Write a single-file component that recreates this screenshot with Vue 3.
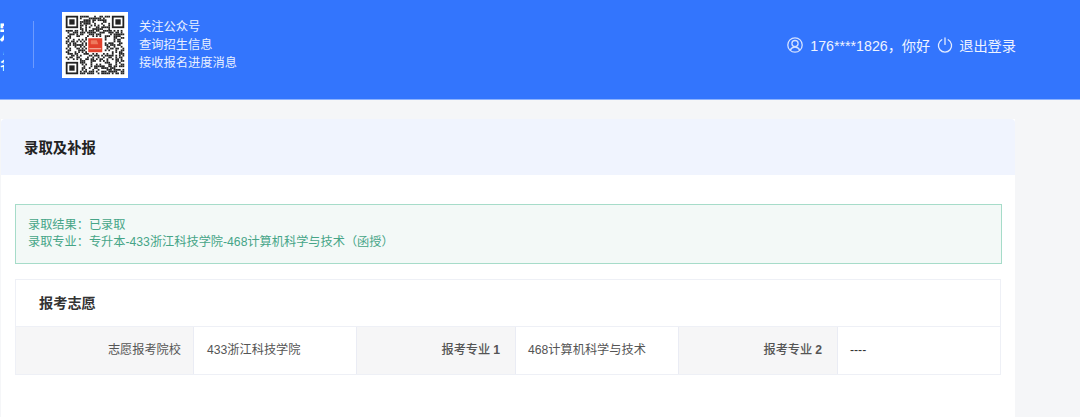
<script setup>
const N = 33
const size = 58.5 / N
const mods = []
let s = 20240611
const rnd = () => {
  s = (s * 1664525 + 1013904223) >>> 0
  return (s >>> 16) / 65536
}
const inFinder = (x, y) =>
  (x < 8 && y < 8) || (x >= N - 8 && y < 8) || (x < 8 && y >= N - 8)
const inLogo = (x, y) => x >= 12 && x <= 21 && y >= 12 && y <= 20
for (let y = 0; y < N; y++) {
  for (let x = 0; x < N; x++) {
    if (inFinder(x, y) || inLogo(x, y)) continue
    if (rnd() > 0.47) mods.push({ k: `${x}-${y}`, x: x * size, y: y * size })
  }
}
const finders = [
  { k: 'a', x: 0, y: 0 },
  { k: 'b', x: (N - 7) * size, y: 0 },
  { k: 'c', x: 0, y: (N - 7) * size }
]
const cells = [
  { label: '志愿报考院校', num: '', value: '433浙江科技学院' },
  { label: '报考专业', num: '1', value: '468计算机科学与技术' },
  { label: '报考专业', num: '2', value: '----' }
]
</script>

<template>
  <div class="page">
    <header class="top">
      <div class="logo-cut">
        <span class="cut-big">宏</span>
        <span class="cut-small">/</span>
        <span class="cut-mid">名</span>
      </div>
      <div class="divider"></div>
      <div class="qr">
        <svg width="66" height="66" viewBox="-3.75 -3.75 66 66">
          <rect x="-3.75" y="-3.75" width="66" height="66" fill="#fff" />
          <g class="qr-dots">
            <rect v-for="m in mods" :key="m.k" :x="m.x" :y="m.y" :width="size" :height="size" fill="#222" />
            <g v-for="f in finders" :key="f.k" :transform="`translate(${f.x} ${f.y})`">
              <rect x="0.9" y="0.9" :width="size * 7 - 1.8" :height="size * 7 - 1.8" fill="none" stroke="#222" stroke-width="1.8" />
              <rect :x="size * 2" :y="size * 2" :width="size * 3" :height="size * 3" fill="#222" />
            </g>
            <rect x="21.5" y="21.5" width="15.5" height="15.5" fill="#fff" />
            <rect x="22.5" y="22.5" width="14" height="14" fill="#e2402c" />
            <path d="M25 24.5h6l1.5 4h-7.500z" fill="#ee7a5e" />
            <rect x="23.500" y="32.500" width="12" height="1" fill="#f6c3b5" />
          </g>
        </svg>
      </div>
      <div class="qr-text">
        <div>关注公众号</div>
        <div>查询招生信息</div>
        <div>接收报名进度消息</div>
      </div>
      <div class="user">
        <svg class="ico" width="16" height="16" viewBox="0 0 16 16" fill="none" stroke="#d5e2ff" stroke-width="1.3">
          <circle cx="8" cy="8" r="7.2" />
          <circle cx="8" cy="6.6" r="3.1" />
          <path d="M3.200 13.200c1-2 2.800-3.200 4.800-3.200s3.800 1.200 4.800 3.200" />
        </svg>
        <span class="phone">176****1826，你好</span>
        <svg class="ico power" width="16" height="16" viewBox="0 0 16 16" fill="none" stroke="#e3ecff" stroke-width="1.3" stroke-linecap="round">
          <path d="M4.800 2.800a6.600 6.600 0 1 0 6.400 0" />
          <path d="M8 1v6.400" />
        </svg>
        <span class="logout">退出登录</span>
      </div>
    </header>

    <main class="card">
      <div class="card-head">录取及补报</div>
      <div class="card-body">
        <div class="alert">
          <div>录取结果：已录取</div>
          <div>录取专业：专升本-433浙江科技学院-468计算机科学与技术（函授）</div>
        </div>
        <section class="panel">
          <div class="panel-title">报考志愿</div>
          <div class="grid">
            <template v-for="c in cells" :key="c.value">
              <div class="cell label" :class="{ strong: c.num }">{{ c.label }}<b v-if="c.num" class="num">{{ c.num }}</b></div>
              <div class="cell value" :class="{ first: !c.num, dash: c.value === '----' }">{{ c.value }}</div>
            </template>
          </div>
        </section>
      </div>
    </main>
  </div>
</template>

<style>
html, body { background: #f5f6f8; overflow: hidden; }
</style>

<style scoped>
.page {
  width: 1080px;
  height: 417px;
  overflow: hidden;
  background: #f5f6f8;
  font-family: "Liberation Sans", "Noto Sans CJK SC", sans-serif;
}
.top {
  height: 99px;
  border-bottom: 1px solid #8db2fd;
  background: #3375fd;
  display: flex;
  align-items: center;
  color: #fff;
}
.logo-cut {
  width: 4px;
  height: 52px;
  overflow: hidden;
  display: flex;
  flex-direction: column;
  align-items: flex-end;
  color: #fff;
  margin-bottom: 7px;
  font-weight: 700;
}
.cut-big { font-size: 22px; line-height: 26px; white-space: nowrap; margin-right: -17px; }
.cut-small { font-size: 10px; line-height: 12px; margin-right: -2px; color: #a9c6ff; font-weight: 400; }
.cut-mid { font-size: 13px; line-height: 14px; margin-right: -9px; }
.divider {
  width: 1px;
  height: 47px;
  margin-left: 29px;
  margin-bottom: 10px;
  background: #6d9bfe;
}
.qr {
  width: 66px;
  height: 66px;
  margin-left: 28px;
  margin-bottom: 9px;
  overflow: hidden;
}
.qr svg { display: block; }
.qr-dots { filter: blur(0.3px); }
.qr-text {
  margin-left: 11px;
  margin-bottom: 9px;
  font-size: 12.25px;
  line-height: 18px;
  color: #e9f0ff;
}
.user {
  margin-left: auto;
  margin-right: 64px;
  margin-bottom: 10px;
  display: flex;
  align-items: center;
  font-size: 14.2px;
  color: #eef3ff;
}
.ico { display: block; flex: none; }
.phone { margin-left: 7px; }
.power { margin-left: 7px; }
.logout { margin-left: 6px; }
.card {
  width: 1014px;
  margin: 19px 0 0 1px;
  background: #fff;
}
.card-head {
  height: 56px;
  line-height: 58px;
  padding-left: 23px;
  background: #f0f4fe;
  border-radius: 4px 4px 0 0;
  font-size: 14.4px;
  font-weight: 700;
  color: #222;
}
.card-body {
  padding: 29px 13px 43px 14px;
}
.alert {
  height: 60px;
  box-sizing: border-box;
  padding: 12px 12px;
  border: 1px solid #a6dcc9;
  background: #f3f9f7;
  color: #46a587;
  font-size: 12.2px;
  line-height: 17px;
}
.panel {
  margin-top: 15px;
  width: 986px;
  box-sizing: border-box;
  border: 1px solid #eef0f6;
}
.panel-title {
  height: 46px;
  line-height: 46px;
  padding-left: 23px;
  font-size: 14.2px;
  font-weight: 700;
  color: #333;
}
.grid {
  display: grid;
  grid-template-columns: 178px 163px 159px 163px 159px 162px;
  height: 47px;
  border-top: 1px solid #eef0f6;
}
.cell {
  font-size: 12.2px;
  line-height: 47px;
  box-sizing: border-box;
}
.label {
  background: #f6f6f7;
  text-align: right;
  padding-right: 12px;
  border-right: 1px solid #eaecf4;
  color: #555;
}
.label.strong { font-weight: 500; padding-right: 15px; }
.num { font-weight: 700; margin-left: 3px; }
.value {
  padding-left: 12px;
  color: #555;
  border-right: 1px solid #eaecf4;
}
.value.first { padding-left: 13px; }
.value.dash { color: #333; }
.value:last-child { border-right: 0; }
</style>
